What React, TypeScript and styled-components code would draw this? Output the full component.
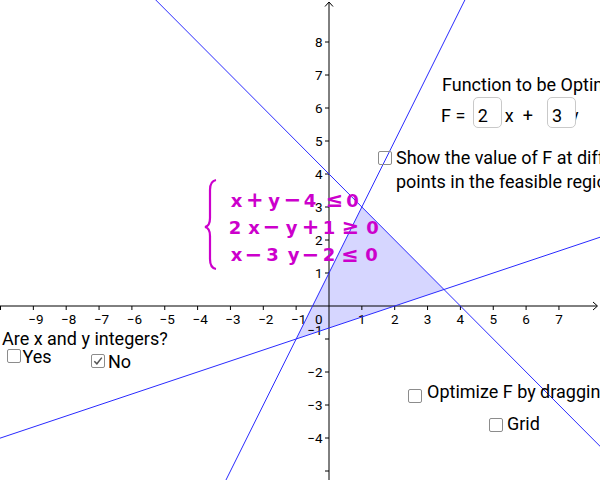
import React, { FunctionComponent } from "react";
import styled, { createGlobalStyle } from "styled-components";

const GlobalStyle = createGlobalStyle`
  html, body {
    margin: 0;
    padding: 0;
    background: #ffffff;
  }
  body {
    font-family: Roboto, "Liberation Sans", sans-serif;
    color: #000000;
  }
`;

// graph coordinates -> screen pixels
const ORIGIN_X = 329;
const ORIGIN_Y = 306;
const UNIT_X = 32.85;
const UNIT_Y = 33;
const sx = (x: number) => ORIGIN_X + x * UNIT_X;
const sy = (y: number) => ORIGIN_Y - y * UNIT_Y;

const Canvas = styled.div`
  position: relative;
  width: 600px;
  height: 480px;
  overflow: hidden;
  background: #ffffff;
`;

const GraphView = styled.svg`
  display: block;
  width: 600px;
  height: 480px;
`;

// a GeoGebra widget: its place on the canvas is part of the content
const Widget = styled.div<{ $x: number; $y: number }>`
  position: absolute;
  left: ${(p) => p.$x}px;
  top: ${(p) => p.$y}px;
  font-size: 18px;
  line-height: 18px;
  white-space: nowrap;
`;

const Equation = styled.div`
  display: flex;
  align-items: flex-start;
  height: 31px;
`;

const Txt = styled.span<{ $ml?: number }>`
  position: relative;
  margin-top: 10px;
  margin-left: ${(p) => p.$ml ?? 0}px;
  white-space: pre;
`;

const InputBox = styled.span<{ $ml: number }>`
  position: relative;
  z-index: 1;
  box-sizing: border-box;
  width: 29px;
  height: 31px;
  margin-left: ${(p) => p.$ml}px;
  padding: 9px 0 0 4px;
  border: 1px solid #c9c9c9;
  border-radius: 5px;
  background: #ffffff;
`;

const CheckRow = styled.div<{ $lh: number }>`
  display: flex;
  align-items: flex-start;
  line-height: ${(p) => p.$lh}px;
`;

const Box = styled.span<{ $top: number; $gap: number }>`
  flex: none;
  box-sizing: border-box;
  width: 14px;
  height: 14px;
  margin-top: ${(p) => p.$top}px;
  margin-right: ${(p) => p.$gap}px;
  border: 1px solid #8c8c8c;
  border-radius: 2px;
  display: flex;
  align-items: center;
  justify-content: center;
`;

interface CheckProps {
  x: number;
  y: number;
  boxTop: number;
  gap: number;
  checked?: boolean;
  lineHeight?: number;
  children: React.ReactNode;
}

const CheckItem: FunctionComponent<CheckProps> = ({
  x,
  y,
  boxTop,
  gap,
  checked,
  lineHeight = 18,
  children,
}) => (
  <Widget $x={x} $y={y}>
    <CheckRow $lh={lineHeight}>
      <Box $top={boxTop} $gap={gap}>
        {checked && (
          <svg width="10" height="10" viewBox="0 0 10 10">
            <path d="M1.3 5.2 L3.9 7.8 L8.8 1.6" fill="none" stroke="#555" strokeWidth="1.5" />
          </svg>
        )}
      </Box>
      <span>{children}</span>
    </CheckRow>
  </Widget>
);

const MAGENTA = "#cc00cc";
const OPERATORS = "+−≤≥";
const formulaRows: { base: number; tokens: [string, number][] }[] = [
  {
    base: 206.5,
    tokens: [["x", 236.5], ["+", 254.7], ["y", 274], ["−", 292.5], ["4", 310], ["≤", 334.5], ["0", 352.5]],
  },
  {
    base: 233.5,
    tokens: [["2", 235], ["x", 254], ["−", 271.5], ["y", 291.5], ["+", 310.5], ["1", 329], ["≥", 350.5], ["0", 372.5]],
  },
  {
    base: 261,
    tokens: [["x", 236.5], ["−", 253.5], ["3", 272.5], ["y", 293.5], ["−", 310.5], ["2", 329], ["≤", 350], ["0", 371.5]],
  },
];

const xTicks = [-10, -9, -8, -7, -6, -5, -4, -3, -2, -1, 1, 2, 3, 4, 5, 6, 7];
const yTicks = [-5, -4, -3, -2, -1, 1, 2, 3, 4, 5, 6, 7, 8];

const Graph: FunctionComponent = () => {
  const region = [
    [sx(1), sy(3)],
    [sx(3.5), sy(0.5)],
    [sx(-1), sy(-1)],
  ]
    .map((p) => p.join(","))
    .join(" ");
  const lines = [
    [-12, 16, 12, -8], // x + y - 4 = 0
    [-6, -11, 6, 13], // 2x - y + 1 = 0
    [-12, -14 / 3, 12, 10 / 3], // x - 3y - 2 = 0
  ];
  return (
    <GraphView viewBox="0 0 600 480">
      <polygon points={region} fill="#0000ff" fillOpacity={0.16} />
      <g stroke="#000" strokeWidth={1} fill="none">
        <line x1={0} y1={ORIGIN_Y} x2={597} y2={ORIGIN_Y} />
        <line x1={ORIGIN_X} y1={2} x2={ORIGIN_X} y2={480} />
        <polyline points={`593,302 597.5,306 593,310`} />
        <polyline points={`325,6.5 329,2 333,6.5`} />
        {xTicks.map((t) => (
          <line key={`xt${t}`} x1={sx(t)} y1={ORIGIN_Y} x2={sx(t)} y2={ORIGIN_Y + 4} />
        ))}
        {yTicks.map((t) => (
          <line key={`yt${t}`} x1={ORIGIN_X - 4} y1={sy(t)} x2={ORIGIN_X} y2={sy(t)} />
        ))}
      </g>
      <g fontFamily="Roboto, 'Liberation Sans', sans-serif" fontSize={13.5} fill="#000">
        {xTicks
          .filter((t) => t > -10)
          .map((t) => (
            <text key={`xl${t}`} x={sx(t) + (t < 0 ? 2.5 : 0)} y={323.5} textAnchor="middle">
              {t < 0 ? `−${-t}` : t}
            </text>
          ))}
        {yTicks
          .filter((t) => t > -5)
          .map((t) => (
            <text key={`yl${t}`} x={322.5} y={t === -1 ? 335 : sy(t) + 4.5} textAnchor="end">
              {t < 0 ? `−${-t}` : t}
            </text>
          ))}
        <text x={322.5} y={323.5} textAnchor="end">
          0
        </text>
      </g>
      <g stroke="#2a2aff" strokeWidth={1}>
        {lines.map(([x1, y1, x2, y2], i) => (
          <line key={i} x1={sx(x1)} y1={sy(y1)} x2={sx(x2)} y2={sy(y2)} />
        ))}
      </g>
      <path
        d="M216 180 Q210 181 210 190 L210 218 Q210 226 205 227 Q210 228 210 236 L210 259 Q210 268 216 269"
        fill="none"
        stroke={MAGENTA}
        strokeWidth={2.2}
      />
      <g fontFamily="'DejaVu Sans', sans-serif" fontWeight="bold" fill={MAGENTA}>
        {formulaRows.map((row, r) =>
          row.tokens.map(([ch, x], i) => (
            <text
              key={`f${r}-${i}`}
              x={x}
              y={OPERATORS.includes(ch) ? row.base + 0.5 : row.base}
              fontSize={OPERATORS.includes(ch) ? 21 : 18}
              textAnchor="middle"
            >
              {ch}
            </text>
          ))
        )}
      </g>
    </GraphView>
  );
};

const App: FunctionComponent = () => {
  return (
    <>
      <GlobalStyle />
      <Canvas>
        <Graph />

        <Widget $x={442} $y={75.5}>
          Function to be Optimized
        </Widget>
        <Widget $x={441} $y={97}>
          <Equation>
            <Txt>F =</Txt>
            <InputBox $ml={7.5}>2</InputBox>
            <Txt $ml={3}>x  +</Txt>
            <InputBox $ml={14}>3</InputBox>
            <Txt $ml={-6}>y</Txt>
          </Equation>
        </Widget>

        <CheckItem x={378} y={146} boxTop={5} gap={4} lineHeight={24}>
          Show the value of F at different
          <br />
          points in the feasible region
        </CheckItem>

        <Widget $x={2} $y={330}>
          Are x and y integers?
        </Widget>
        <CheckItem x={7} y={348} boxTop={1} gap={1.5}>
          Yes
        </CheckItem>
        <CheckItem x={91} y={353} boxTop={1} gap={3} checked>
          No
        </CheckItem>

        <CheckItem x={408} y={383} boxTop={5.5} gap={5}>
          Optimize F by dragging the line
        </CheckItem>
        <CheckItem x={489} y={415} boxTop={2.5} gap={4}>
          Grid
        </CheckItem>
      </Canvas>
    </>
  );
};

export default App;
